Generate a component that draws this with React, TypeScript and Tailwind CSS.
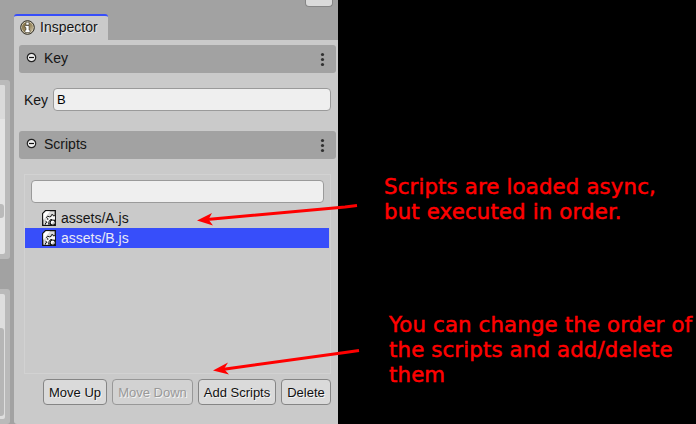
import type { ReactNode } from 'react';

function InfoIcon() {
  return (
    <svg width="15" height="15" viewBox="0 0 15 15" className="shrink-0">
      <defs>
        <linearGradient id="info" x1="0" y1="0" x2="1" y2="1">
          <stop offset="0" stopColor="#7d6c42" />
          <stop offset="0.6" stopColor="#a08f68" />
          <stop offset="1" stopColor="#d8cfb4" />
        </linearGradient>
      </defs>
      <circle cx="7.5" cy="7.5" r="6.8" fill="#d6cfb8" stroke="#29251b" strokeWidth="1" />
      <circle cx="7.5" cy="7.5" r="5.6" fill="url(#info)" />
      <path d="M6 2.2h3v2.8H6zM5 5.5h4v4.6h1v2.4H5v-2.4h1V7.6H5z" fill="#fff" stroke="#29251b" strokeWidth="0.5" />
    </svg>
  );
}

function CollapseIcon() {
  return (
    <svg width="11" height="11" viewBox="0 0 11 11" className="shrink-0">
      <circle cx="5.5" cy="5.5" r="4.2" fill="#f0f0f0" stroke="#222" strokeWidth="1.2" />
      <path d="M3 5.5h5" stroke="#111" strokeWidth="1.2" />
    </svg>
  );
}

function ScriptIcon() {
  return (
    <svg width="14" height="16" viewBox="0 0 14 16" className="shrink-0">
      <path d="M3.5.7h9.8v14.6H.7V3.5z" fill="#dcdcdc" stroke="#111" strokeWidth="1.3" />
      <path d="M1.3 3.8L3.8 1.3H8L1.3 10z" fill="#fff" />
      <path d="M3.5 14.500V13L5 12.500 3.500 10.500 4.500 9.500 6 10 6 8.500 4.500 7.500 5.500 6 7.500 6.500 9 6.500 9.500 4.500H11L11.500 6 13 5.500V14.500z" fill="#f6f6f6" />
      <path d="M3.500 14.500V13L5 12.500 3.500 10.800M5.800 9.800V8.500L4.500 7.500 5.500 6.200 7.500 6.800 9 6.500 9.500 4.700H11L11.500 6 13 5.500" fill="none" stroke="#1a1a1a" strokeWidth="1" />
      <path d="M6.500 14.500L7 11.500 8.500 9.500H10" fill="none" stroke="#222" strokeWidth="1" />
      <circle cx="10.700" cy="12.600" r="2.600" fill="#fff" stroke="#151515" strokeWidth="1.200" />
      <circle cx="11.400" cy="13.300" r="1" fill="#bbb" />
      <path d="M7.500 13h1v2.500h-1zM12.500 9.500h1v2h-1z" fill="#151515" />
    </svg>
  );
}

function SectionHeader({ children }: { children: ReactNode }) {
  return (
    <div className="flex h-7 w-[317px] shrink-0 items-center rounded-[3px] bg-[#a2a2a2] pr-[11px] pl-[7px] text-sm">
      <div className="-mt-[3px]"><CollapseIcon /></div>
      <span className="-mt-0.5 ml-[7px] flex-1">{children}</span>
      <svg width="5" height="15" viewBox="0 0 5 15" className="mt-px" fill="#303030">
        <circle cx="2.5" cy="2.5" r="1.6" /><circle cx="2.5" cy="7.5" r="1.6" /><circle cx="2.5" cy="12.5" r="1.6" />
      </svg>
    </div>
  );
}

function FileRow({ name, selected = false }: { name: string; selected?: boolean }) {
  return (
    <div className={selected ? 'flex h-5 items-center bg-[#374efa] pl-[17px] text-[#e9e9f6]' : 'flex h-5 items-center pl-[17px]'}>
      <ScriptIcon />
      <span className="ml-[5px] text-sm">{name}</span>
    </div>
  );
}

function Button({ children, width, disabled = false }: { children: ReactNode; width: string; disabled?: boolean }) {
  return (
    <button
      disabled={disabled}
      className={`flex h-[26px] shrink-0 items-center justify-center rounded-[4px] border whitespace-nowrap [text-shadow:1px_1px_0_#f3f3f3] ${width} ${
        disabled ? 'border-[#989898] bg-[#d2d2d2] text-[#999]' : 'border-[#858585] bg-[#dadada] text-[#111]'
      }`}
    >
      <span className="mt-px">{children}</span>
    </button>
  );
}

export default function App() {
  return (
    <div className="relative flex h-[424px] w-[696px] overflow-hidden bg-black font-['Liberation_Sans',sans-serif] text-[13px] text-[#151515]">
      <div className="flex h-full w-[338px] shrink-0 bg-[#a2a2a2]">
        <div className="flex w-3.5 shrink-0 flex-col items-start pt-20">
          <div className="h-[179px] w-2.5 rounded-r-[3px] bg-[#bababa] py-[5px]">
            <div className="h-[169px] w-[5px] overflow-hidden rounded-r-[2px] bg-[#e4e4e4]">
              <div className="h-[34px] bg-[#dadada]" />
              <div className="mt-[85px] h-3.5 w-1 rounded-r-[3px] bg-[#bababa]" />
            </div>
          </div>
          <div className="mt-[30px] h-[135px] w-2.5 rounded-r-[3px] bg-[#bababa] py-[5px]">
            <div className="h-[125px] w-[5px] rounded-r-[2px] bg-[#dedede] pt-[34px]">
              <div className="h-[88px] w-1 rounded-r-[3px] bg-[#b6b6b6]" />
            </div>
          </div>
        </div>
        <div className="flex min-w-0 flex-1 flex-col">
          <div className="flex h-10 shrink-0 justify-between pr-[5px]">
            <div className="mt-3.5 flex h-[26px] w-[94px] items-center rounded-t-[3px] border-t-2 border-[#374efa] bg-[#cacaca] pl-1.5">
              <div className="-mt-px"><InfoIcon /></div>
              <span className="-mt-0.5 ml-[5px] text-sm [text-shadow:1px_1px_0_#e6e6e6]">Inspector</span>
            </div>
            <div className="h-[7px] w-7 rounded-b-[4px] border border-t-0 border-[#858585] bg-[#dadada]" />
          </div>
          <div className="flex flex-1 flex-col rounded-bl-[3px] bg-[#cacaca] pt-[5px] pl-[5px]">
            <SectionHeader>Key</SectionHeader>
            <label className="mt-[15px] ml-[5px] flex h-[23px] shrink-0 items-center">
              <span className="w-[29px] text-sm">Key</span>
              <span className="flex h-[23px] w-[278px] items-center rounded-[4px] border border-[#9a9a9a] bg-[#efefef] pl-[3px] text-black">B</span>
            </label>
            <div className="mt-5"><SectionHeader>Scripts</SectionHeader></div>
            <div className="mt-[15px] ml-[5px] h-[200px] w-[307px] shrink-0 border border-[#d2d2d2] pt-[5px]">
              <div className="mb-[5px] ml-1.5 h-[23px] w-[293px] rounded-[4px] border border-[#9a9a9a] bg-[#efefef]" />
              <div className="w-[304px]">
                <FileRow name="assets/A.js" />
                <FileRow name="assets/B.js" selected />
              </div>
            </div>
            <div className="mt-[5px] ml-6 flex gap-[5px]">
              <Button width="w-16">Move Up</Button>
              <Button width="w-[81px]" disabled>Move Down</Button>
              <Button width="w-[78px]">Add Scripts</Button>
              <Button width="w-[50px]">Delete</Button>
            </div>
          </div>
        </div>
      </div>
      <div className="flex-1 pt-[174px] font-['DejaVu_Sans',sans-serif] text-[21.3px] leading-[25px] tracking-[0.14px] whitespace-nowrap text-[#f00] [-webkit-text-stroke:0.5px_#f00]">
        <p className="pl-[46px]">Scripts are loaded async,<br />but executed in order.</p>
        <p className="mt-[88px] pl-[51px]">You can change the order of<br />the scripts and add/delete<br />them</p>
      </div>
      <svg width="696" height="424" viewBox="0 0 696 424" className="pointer-events-none absolute inset-0" fill="#f00" stroke="#f00">
        <path d="M207 219.5L345 207L357 205.5M222 369.5L345 352.5L359 350.5" strokeWidth="3" fill="none" />
        <path d="M197 220.500L212 213L208.500 219.500L213 225.500zM213 370.500L228 362.500L224 369L229 374.500z" stroke="none" />
      </svg>
    </div>
  );
}
